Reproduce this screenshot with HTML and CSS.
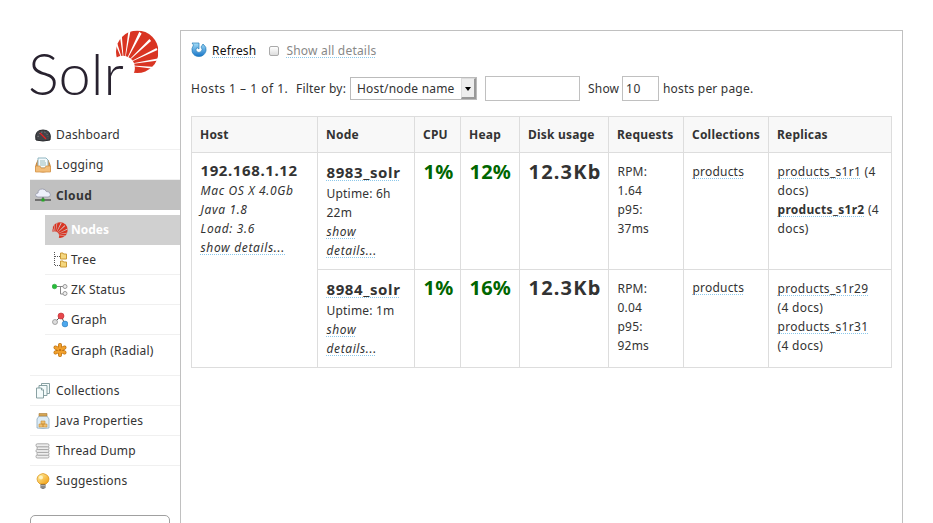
FILE: index.html
```html
<!DOCTYPE html>
<html lang="en">
<head>
<meta charset="utf-8">
<title>Solr Admin</title>
<link rel="stylesheet" href="styles.css">
</head>
<body>
<svg class="defs" width="0" height="0" aria-hidden="true">
  <defs>
    <linearGradient id="blue" x1="0" y1="0" x2="0" y2="1"><stop offset="0" stop-color="#a5def8"/><stop offset="1" stop-color="#1674c8"/></linearGradient>
    <linearGradient id="gold" x1="0" y1="0" x2="1" y2="1"><stop offset="0" stop-color="#fff4a8"/><stop offset="1" stop-color="#f29a0b"/></linearGradient>
    <mask id="rays" maskUnits="userSpaceOnUse" x="0" y="0" width="126" height="128">
      <rect width="126" height="128" fill="#fff"/>
      <g transform="translate(24 103)">
        <circle cx="-4" cy="9" r="36"/>
        <path d="M0 0-25-60-20-63ZM0 0-13-88-7-90ZM0 0 13-103 19-101ZM0 0 45-98 52-93ZM0 0 75-77 80-71ZM0 0 96-50 99-44ZM0 0 103-20 102-13ZM0 0 95 6 91 12Z"/>
      </g>
    </mask>
    <symbol id="fan" viewBox="0 0 126 128">
      <circle cx="63" cy="64" r="63" fill="#d93422" mask="url(#rays)"/>
    </symbol>
  </defs>
</svg>
<div class="page">
  <aside class="side">
    <svg class="logo" viewBox="0 0 150 80">
      <use href="#fan" x="86" y="0" width="42.5" height="43.5"/>
      <text class="wordmark" x="-2" y="65" textLength="96" lengthAdjust="spacingAndGlyphs">Solr</text>
    </svg>
    <nav>
      <ul class="menu">
        <li><svg class="icon" viewBox="0 0 16 16"><path d="M1 13Q-1 3 8 3t7 10Q8 15 1 13Z" fill="#424449" stroke="#292a2d"/><path d="M3 10q1-5 5-5t5 5" fill="none" stroke="#999" stroke-dasharray="1 2"/><path d="m5 6 6 6" stroke="#e52222" stroke-width="1.2"/></svg>Dashboard</li>
        <li><svg class="icon" viewBox="0 0 16 16"><path d="m1 8 2-5h10l2 5v6q-7 2-14 0Z" fill="#d99649" stroke="#c7843a"/><path d="M3 1h8l2 2v8H3Z" fill="#f5fbfd" stroke="#8fb5c1"/><path d="M5 4h5M5 6h6M5 8h6" stroke="#9bb"/><path d="M.5 9H5l1 2h4l1-2h4.500v6H.5Z" fill="#f2bd79" stroke="#d18c3c" stroke-width=".7"/></svg>Logging</li>
        <li class="current"><svg class="icon" viewBox="0 0 16 16"><path d="M0 13h16M8 9v4" stroke="#555" stroke-width="1.5"/><path d="M3 10Q0 10 .7 7.500 1.300 6 3 6q0-4 4.500-4 3 0 3.800 2.500Q15 4 15.400 7.500 15.500 10 13 10Z" fill="#eef0fb" stroke="#9598aa" stroke-width=".8"/><path d="M6.500 11.500h3v3h-3Z" fill="#22a923"/></svg>Cloud</li>
      </ul>
      <ul class="menu sub">
        <li class="active"><svg class="icon" viewBox="0 0 16 16"><use href="#fan" width="16" height="16"/></svg>Nodes</li>
        <li><svg class="icon" viewBox="0 0 16 16"><path d="M2.500 0v13.500H8M3 4.500H8" fill="none" stroke="#555" stroke-dasharray="1 1"/><path d="M8.500 2V1H11l.5 1H14.500V7h-6ZM8.500 10V9H11l.5 1H14.500v5h-6Z" fill="#f5d77e" stroke="#ca9a38"/></svg>Tree</li>
        <li><svg class="icon" viewBox="0 0 16 16"><path d="M5 4.500H11M8.500 4.500V12H11" fill="none" stroke="#888"/><circle cx="2.500" cy="4.500" r="2.300" fill="#25bd39" stroke="#189328" stroke-width=".5"/><circle cx="13" cy="4.500" r="2" fill="#eee" stroke="#999"/><circle cx="13" cy="11.500" r="2" fill="#eee" stroke="#999"/></svg>ZK Status</li>
        <li><svg class="icon" viewBox="0 0 16 16"><path d="m3 10 6-6 4 8" fill="none" stroke="#555"/><circle cx="9" cy="4" r="3" fill="#e6484c" stroke="#bd282d" stroke-width=".6"/><circle cx="3" cy="10" r="2.500" fill="#ddd" stroke="#888" stroke-width=".7"/><circle cx="13" cy="12" r="2.900" fill="#4da8ed" stroke="#2678bb" stroke-width=".6"/></svg>Graph</li>
        <li><svg class="icon" viewBox="0 0 16 16"><path d="M8 3v10M3.500 5.500l9 5M3.500 10.500l9-5" stroke="#bd7010" stroke-width="4" stroke-linecap="round"/><path d="M8 3v10M3.500 5.500l9 5M3.500 10.500l9-5" stroke="#f0a02d" stroke-width="2.600" stroke-linecap="round"/><circle cx="8" cy="8" r="1" fill="#b8690b"/></svg>Graph (Radial)</li>
      </ul>
      <ul class="menu lower">
        <li><svg class="icon" viewBox="0 0 16 16"><g fill="#f4fbfb" stroke="#7c9699" stroke-width=".9"><path d="M6.500.5h8v10h-8Z"/><path d="M4 2.500h8v10H4Z"/><path d="M1.500 5h5l2 2v8h-7Z"/><path d="M6.500 5v2h2"/></g></svg>Collections</li>
        <li><svg class="icon" viewBox="0 0 16 16"><path d="M4 3h8l2 3v9q-6 1-12 0V6Z" fill="#dcecf7" stroke="#8da9bd" stroke-width=".8"/><path d="M4 .5h8v2.500H4Z" fill="#d5a654" stroke="#a87a35" stroke-width=".6"/><path d="M6 8h4v3H6ZM4 11h4v3H4ZM8 11h4v3H8Z" fill="#efc070" stroke="#c88e36" stroke-width=".6"/></svg>Java Properties</li>
        <li><svg class="icon" viewBox="0 0 16 16"><g fill="#eee" stroke="#999" stroke-width=".8"><rect x="1" y="12" width="13" height="3" rx="1.300"/><rect x="2" y="9.200" width="12" height="3" rx="1.300"/><rect x="1" y="6.400" width="13" height="3" rx="1.300"/><rect x="2" y="3.600" width="12" height="3" rx="1.300"/><rect x="1" y=".8" width="13" height="3" rx="1.300"/></g></svg>Thread Dump</li>
        <li><svg class="icon" viewBox="0 0 16 16"><path d="M5.500 11h5v4l-2.500 1-2.500-1Z" fill="#666"/><path d="M6 12.500h4M6 14h4" stroke="#ddd" stroke-width=".6"/><path d="M5 11Q2 9 2 6t3-4.500q3-2 6 0Q14 3 14 6t-3 5Z" fill="url(#gold)" stroke="#d98e14" stroke-width=".7"/><circle cx="6" cy="4.500" r="2" fill="#fffbd8" opacity=".8"/></svg>Suggestions</li>
      </ul>
    </nav>
    <div class="core-box"></div>
  </aside>
  <main class="content">
    <div class="actions">
      <svg class="icon" viewBox="0 0 16 16"><path d="M1 1h7v6L5.900 5.500Q4.200 8 5.500 9.500q2.500 2 4.800 0Q12 7.500 10 5l2-3q4 3 3 7-2 5.500-7 5.500T1.200 10Q.2 6.500 2.500 3Z" fill="url(#blue)" stroke="#257db8" stroke-width=".7"/></svg>
      <a class="refresh">Refresh</a>
      <span class="check"></span>
      <a class="details">Show all details</a>
    </div>
    <div class="filters">
      <span class="t-hosts">Hosts 1 – 1 of 1.</span>
      <span class="t-filter">Filter by:</span>
      <div class="select"><span>Host/node name</span><i class="arrow"></i></div>
      <div class="field"></div>
      <span class="t-show">Show</span>
      <div class="field count">10</div>
      <span>hosts per page.</span>
    </div>
    <table>
      <colgroup><col class="c1"><col class="c2"><col class="c3"><col class="c4"><col class="c5"><col class="c6"><col class="c7"><col class="c8"></colgroup>
      <thead><tr><th>Host</th><th>Node</th><th>CPU</th><th>Heap</th><th>Disk usage</th><th>Requests</th><th>Collections</th><th>Replicas</th></tr></thead>
      <tbody>
        <tr class="r1">
          <td rowspan="2" class="host"><b class="name">192.168.1.12</b><em>Mac OS X 4.0Gb<br>Java 1.8<br>Load: 3.6<br><a>show details...</a></em></td>
          <td class="node"><b class="name"><a>8983_solr</a></b>Uptime: 6h<br>22m<br><em><a>show<br>details...</a></em></td>
          <td class="big ok">1%</td><td class="big ok">12%</td><td class="big disk">12.3Kb</td>
          <td>RPM:<br>1.64<br>p95:<br>37ms</td>
          <td><a>products</a></td>
          <td class="replicas"><a>products_s1r1</a> (4<br>docs)<br><a class="leader">products_s1r2</a> (4<br>docs)</td>
        </tr>
        <tr class="r2">
          <td class="node"><b class="name"><a>8984_solr</a></b>Uptime: 1m<br><em><a>show<br>details...</a></em></td>
          <td class="big ok">1%</td><td class="big ok">16%</td><td class="big disk">12.3Kb</td>
          <td>RPM:<br>0.04<br>p95:<br>92ms</td>
          <td class="coll"><a>products</a></td>
          <td class="replicas"><a>products_s1r29</a><br>(4 docs)<br><a>products_s1r31</a><br>(4 docs)</td>
        </tr>
      </tbody>
    </table>
  </main>
</div>
</body>
</html>
```
FILE: styles.css
```css
* { box-sizing: border-box; }
body { margin: 0; background: #fff; color: #333; font: 12px/19px "Noto Sans", "Open Sans", sans-serif; letter-spacing: .2px; overflow: hidden; }
.defs { display: block; }
.page { display: flex; height: 523px; padding: 30px 30px 0; overflow: hidden; }
.side { width: 150px; flex: none; }
.logo { display: block; width: 150px; height: 80px; overflow: visible; }
.wordmark { font: 300 58px Lato, sans-serif; fill: #28222f; letter-spacing: 0; }
nav { padding-top: 10px; }
.menu { list-style: none; margin: 0; padding: 0; }
.menu li { display: flex; align-items: center; height: 30px; padding-left: 5px; border-bottom: 1px solid #f0f0f0; white-space: nowrap; }
.menu .icon { margin-right: 5px; }
.icon { width: 16px; height: 16px; flex: none; }
.menu .current { background: #c0c0c0; border: 0; font-weight: 700; letter-spacing: .4px; }
.menu.sub { margin: 5px 0 0 15px; }
.menu .active { background: #d0d0d0; color: #fff; border: 0; font-weight: 700; padding-bottom: 1px; letter-spacing: 0; }
.menu.sub li { padding-left: 7px; }
.menu.sub .icon { margin-right: 3px; }
.sub li:last-child { border: 0; }
.menu.lower { margin-top: 10px; border-top: 1px solid #f0f0f0; }
.lower li:last-child { border: 0; padding-bottom: 1px; }
.core-box { height: 30px; width: 140px; margin-top: 19px; border: 1px solid #a0a0a0; border-radius: 5px; }
.content { width: 723px; flex: none; border: 1px solid #c0c0c0; border-bottom: 0; padding: 9px 10px 0; }
.actions { display: flex; align-items: center; height: 20px; }
.actions .refresh { margin-left: 5px; color: #111; }
a { color: inherit; text-decoration: underline dotted 1px #8cc8ea; text-underline-offset: 2px; text-decoration-skip-ink: none; }
.actions a { height: 17px; line-height: 17px; margin-top: 1px; }
.check { width: 10px; height: 10px; margin: 2px 7px 0 13px; border: 1px solid #aaa; border-radius: 2px; background: linear-gradient(#fff, #ddd); }
.details { color: #888; }
.filters { display: flex; align-items: center; height: 25px; margin-top: 16px; white-space: nowrap; }
.t-hosts { width: 105px; letter-spacing: .5px; }
.t-filter { width: 54px; }
.select { display: flex; justify-content: space-between; align-items: center; width: 127px; height: 23px; border: 1px solid #bbb; padding-left: 6px; }
.arrow { position: relative; width: 15px; height: 21px; background: #eee; border: 1px solid #ddd; border-right: 2px solid #999; border-bottom: 2px solid #999; }
.arrow::after { content: ""; position: absolute; left: 3px; top: 8px; border: 3px solid transparent; border-top: 4px solid #000; border-bottom: 0; }
.field { width: 95px; height: 25px; margin-left: 8px; border: 1px solid #c0c0c0; }
.t-show { width: 34px; margin-left: 8px; }
.count { width: 37px; margin: 0 4px 0 0; padding: 2px 3px; letter-spacing: .6px; }
table { width: 701px; table-layout: fixed; border-collapse: collapse; margin-top: 15px; }
.c1 { width: 126px; } .c2 { width: 97px; } .c3 { width: 46px; } .c4 { width: 59px; } .c5 { width: 89px; } .c6 { width: 75px; } .c7 { width: 85px; } .c8 { width: 123px; }
th, td { border: 1px solid #ddd; padding: 9px 0 0 8.5px; text-align: left; vertical-align: top; white-space: nowrap; }
th { height: 36px; padding: 0 0 0 8px; vertical-align: middle; background: #f8f8f8; }
.r1 { height: 117px; }
.r2 { height: 98px; }
.name { display: block; font-size: 15px; line-height: 20px; height: 20px; letter-spacing: .6px; }
.host em { letter-spacing: .65px; }
.node em { letter-spacing: .6px; }
.r1 .host { padding-top: 7px; }
.host .name { height: 21px; }
.r1 .node { padding-top: 8px; }
.r2 .node { padding-top: 8px; }
.node .name { height: 23px; line-height: 22px; }
.big { font-size: 20px; font-weight: 700; line-height: 21px; padding-top: 8px; }
.r2 .big { padding-top: 7px; }
.r2 .coll { padding-top: 8px; }
.disk { letter-spacing: 1.2px; }
.replicas { letter-spacing: .3px; }
.ok { color: #060; }
.leader { font-weight: 700; }
```
